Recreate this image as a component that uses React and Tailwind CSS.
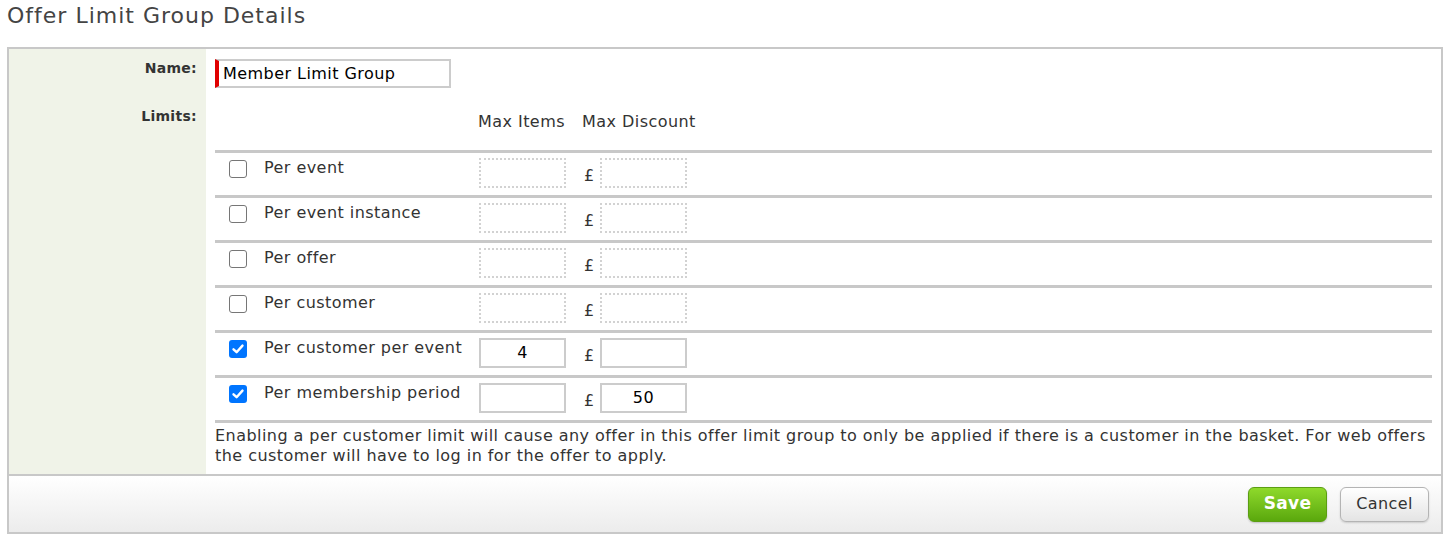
const rows = [
  { label: "Per event", checked: false, items: "", discount: "" },
  { label: "Per event instance", checked: false, items: "", discount: "" },
  { label: "Per offer", checked: false, items: "", discount: "" },
  { label: "Per customer", checked: false, items: "", discount: "" },
  { label: "Per customer per event", checked: true, items: "4", discount: "" },
  { label: "Per membership period", checked: true, items: "", discount: "50" },
];

function Checkbox({ checked }) {
  if (checked) {
    return (
      <div className="w-[18px] h-[18px] rounded-[3px] bg-[#0075ff] flex items-center justify-center">
        <svg width="14" height="14" viewBox="0 0 14 14">
          <path d="M2.5 7.3 L5.6 10.2 L11.5 3.6" fill="none" stroke="#fff" strokeWidth="2.4" strokeLinecap="round" strokeLinejoin="round" />
        </svg>
      </div>
    );
  }
  return <div className="w-[18px] h-[18px] rounded-[3px] border border-[#767676] bg-white" />;
}

function Field({ value, enabled }) {
  return (
    <div
      className={
        "w-[87px] h-[30px] flex items-center justify-center text-black " +
        (enabled ? "border-2 border-solid border-[#cccccc]" : "border-2 border-dotted border-[#d2d2d2]")
      }
    >
      {value}
    </div>
  );
}

export default function App() {
  return (
    <div className="bg-white w-[1450px] h-[542px] text-[#333] text-[16px] tracking-[0.45px] font-['DejaVu_Sans',Verdana,sans-serif]">
      <h1 className="h-[47px] pl-[7px] pt-[1px] text-[22px] tracking-[1px] text-[#444] leading-[30px]">Offer Limit Group Details</h1>

      <div className="mx-[7px] border-2 border-[#c8c8c8]">
        <div className="grid grid-cols-[197px_1fr]">
          {/* Name row */}
          <div className="bg-[#f0f3e8] pr-[9px] pt-[10px] text-right text-[14px] tracking-[0.3px] font-bold leading-[18px]">Name:</div>
          <div className="pl-[9px] pt-[10px] pb-[11px]">
            <div className="w-[236px] h-[29px] border-2 border-[#cccccc] border-l-[4px] border-l-[#e00000] pl-[4px] flex items-center text-black">
              Member Limit Group
            </div>
          </div>

          {/* Limits row */}
          <div className="bg-[#f0f3e8] pr-[9px] pt-[8px] text-right text-[14px] tracking-[0.3px] font-bold leading-[18px]">Limits:</div>
          <div className="pl-[9px] pr-[9px]">
            <div className="flex h-[51px] items-center pb-[6px]">
              <div className="w-[263px]" />
              <div className="w-[104px]">Max Items</div>
              <div>Max Discount</div>
            </div>
            {rows.map((r) => (
              <div key={r.label} className="flex h-[45px] border-t-[3px] border-[#c8c8c8]">
                <div className="w-[49px] pl-[14px] pt-[7px]">
                  <Checkbox checked={r.checked} />
                </div>
                <div className="w-[215px] pt-[5px] leading-[20px]">{r.label}</div>
                <div className="pt-[5px] flex">
                  <Field value={r.items} enabled={r.checked} />
                  <span className="w-[34px] pl-[18px] pt-[9px] leading-[18px]">£</span>
                  <Field value={r.discount} enabled={r.checked} />
                </div>
              </div>
            ))}
            <div className="border-t-[3px] border-[#c8c8c8] pt-[3px] pb-[8px] leading-[20px]">
              Enabling a per customer limit will cause any offer in this offer limit group to only be applied if there is a customer in the basket. For web offers the customer will have to log in for the offer to apply.
            </div>
          </div>
        </div>

        <div className="border-t-2 border-[#c8c8c8] h-[58px] bg-gradient-to-b from-white to-[#ececec] flex items-center justify-end gap-[13px] pr-[12px]">
          <button className="w-[79px] h-[35px] rounded-[6px] border border-[#5b9e12] bg-gradient-to-b from-[#8fd92b] to-[#5aa80c] text-white font-bold text-[17px] tracking-[0.3px] shadow-[0_1px_2px_rgba(0,0,0,0.2)]">
            Save
          </button>
          <button className="w-[89px] h-[35px] rounded-[6px] border border-[#b4b4b4] bg-gradient-to-b from-white to-[#e4e4e4] text-[#333] text-[16px] tracking-[0.4px] shadow-[0_1px_2px_rgba(0,0,0,0.15)]">
            Cancel
          </button>
        </div>
      </div>
    </div>
  );
}
